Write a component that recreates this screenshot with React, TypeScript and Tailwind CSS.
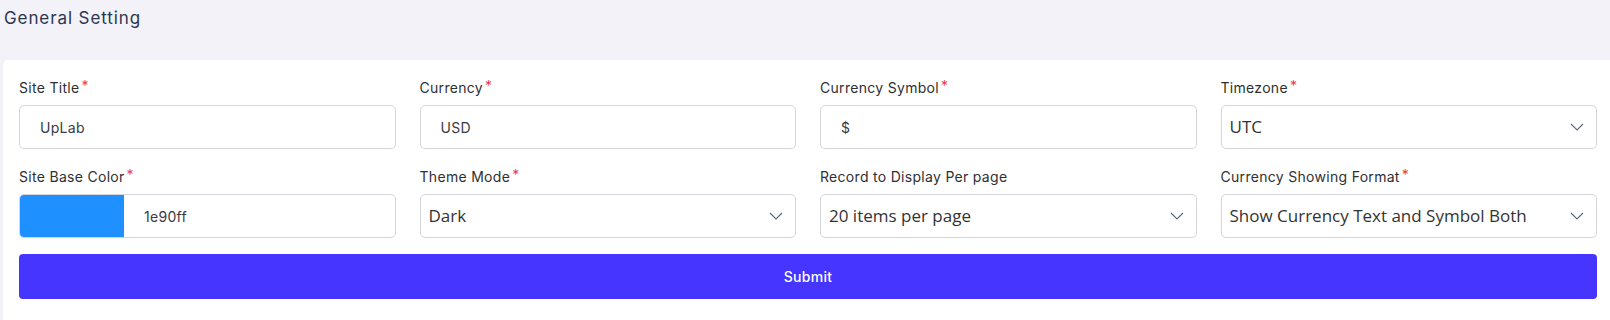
import React from 'react';

const label = "text-[14px] leading-5 tracking-[0.3px] text-[#2f2f33] font-['Inter','Liberation_Sans',sans-serif] mb-[7px] flex";
const box = "h-[44px] w-full rounded-[5px] border border-[#d3d5da] bg-white flex items-center";

const Req = () => <span className="text-[#ea3a4f] ml-[2px] -mt-[2px]">*</span>;

const Chevron = () => (
  <svg width="14" height="8" viewBox="0 0 14 8" fill="none" className="ml-auto mr-[12px]">
    <path d="M1 1l6 6 6-6" stroke="#5f6b80" strokeWidth="1.2" />
  </svg>
);

const TextField = ({ name, value, required }: { name: string; value: string; required?: boolean }) => (
  <div>
    <div className={label}>{name}{required && <Req />}</div>
    <div className={box}>
      <span className="pl-[20px] text-[14px] tracking-[0.3px] text-[#3a3a3f] font-['Inter','Liberation_Sans',sans-serif]">{value}</span>
    </div>
  </div>
);

const SelectField = ({ name, value, required }: { name: string; value: string; required?: boolean }) => (
  <div>
    <div className={label}>{name}{required && <Req />}</div>
    <div className={box}>
      <span className="pl-[8px] text-[17px] text-[#333] font-['Open_Sans','Noto_Sans',sans-serif]">{value}</span>
      <Chevron />
    </div>
  </div>
);

const App: React.FC = () => {
  return (
    <div className="w-[1610px] h-[320px] overflow-hidden bg-[#f3f2f8]">
      <h1 className="pl-[4px] pt-[6px] h-[60px] text-[17px] leading-6 tracking-[0.9px] text-[#2c3651] font-['Inter','Liberation_Sans',sans-serif]">
        General Setting
      </h1>
      <div className="ml-[3px] w-[1610px] h-[260px] bg-white rounded-tl-[5px] pl-4 pr-4 pt-[18px]">
        <div className="grid grid-cols-4 gap-x-6 gap-y-[18px]">
          <TextField name="Site Title" value="UpLab" required />
          <TextField name="Currency" value="USD" required />
          <TextField name="Currency Symbol" value="$" required />
          <SelectField name="Timezone" value="UTC" required />
          <div>
            <div className={label}>Site Base Color<Req /></div>
            <div className={box + " overflow-hidden"}>
              <div className="w-[104px] h-full bg-[#1e90ff]" />
              <span className="pl-[20px] text-[14px] tracking-[0.3px] text-[#3a3a3f] font-['Inter','Liberation_Sans',sans-serif]">1e90ff</span>
            </div>
          </div>
          <SelectField name="Theme Mode" value="Dark" required />
          <SelectField name="Record to Display Per page" value="20 items per page" />
          <SelectField name="Currency Showing Format" value="Show Currency Text and Symbol Both" required />
        </div>
        <button className="mt-4 w-full h-[45px] rounded-[4px] bg-[#4634ff] text-white text-[14px] tracking-[0.3px] font-medium font-['Inter','Liberation_Sans',sans-serif]">
          Submit
        </button>
      </div>
    </div>
  );
};

export default App;
